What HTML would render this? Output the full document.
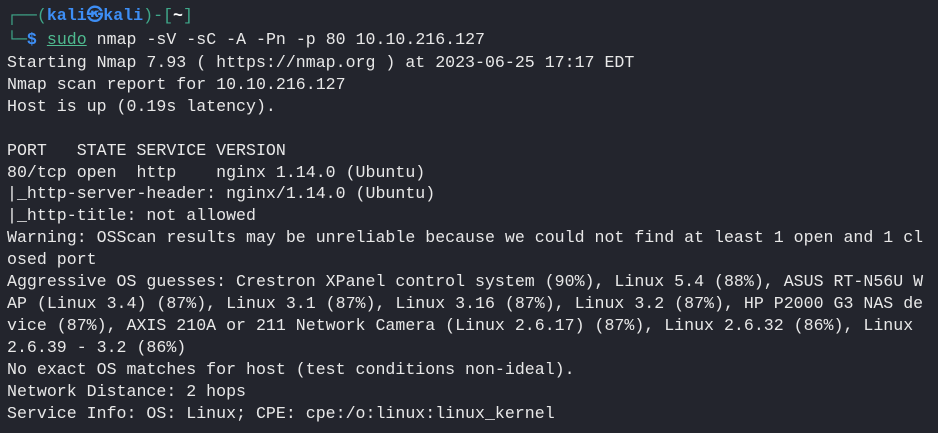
<!DOCTYPE html>
<html><head><meta charset="utf-8"><style>
body{margin:0;width:938px;height:433px;background:#23252d;overflow:hidden;}
pre{margin:0;position:absolute;left:7px;font-family:"Liberation Mono","DejaVu Sans Mono",monospace;font-size:16.6px;line-height:21.9px;color:#e8e8e8;white-space:pre;}
.g{color:#3fa88a}.b{color:#3d8ef5;font-weight:bold}.w{color:#fff;font-weight:bold}
.u{color:#4fbb90;text-decoration:underline}
</style></head><body>
<pre style="top:4px;line-height:24px"><span class="g">┌──(</span><span class="b">kali㉿kali</span><span class="g">)-[</span><span class="w">~</span><span class="g">]</span>
<span class="g">└─</span><span class="b">$</span> <span class="u">sudo</span> nmap -sV -sC -A -Pn -p 80 10.10.216.127</pre>
<pre style="top:52px">Starting Nmap 7.93 ( https://nmap.org ) at 2023-06-25 17:17 EDT
Nmap scan report for 10.10.216.127
Host is up (0.19s latency).

PORT   STATE SERVICE VERSION
80/tcp open  http    nginx 1.14.0 (Ubuntu)
|_http-server-header: nginx/1.14.0 (Ubuntu)
|_http-title: not allowed
Warning: OSScan results may be unreliable because we could not find at least 1 open and 1 cl
osed port
Aggressive OS guesses: Crestron XPanel control system (90%), Linux 5.4 (88%), ASUS RT-N56U W
AP (Linux 3.4) (87%), Linux 3.1 (87%), Linux 3.16 (87%), Linux 3.2 (87%), HP P2000 G3 NAS de
vice (87%), AXIS 210A or 211 Network Camera (Linux 2.6.17) (87%), Linux 2.6.32 (86%), Linux 
2.6.39 - 3.2 (86%)
No exact OS matches for host (test conditions non-ideal).
Network Distance: 2 hops
Service Info: OS: Linux; CPE: cpe:/o:linux:linux_kernel</pre>
</body></html>
